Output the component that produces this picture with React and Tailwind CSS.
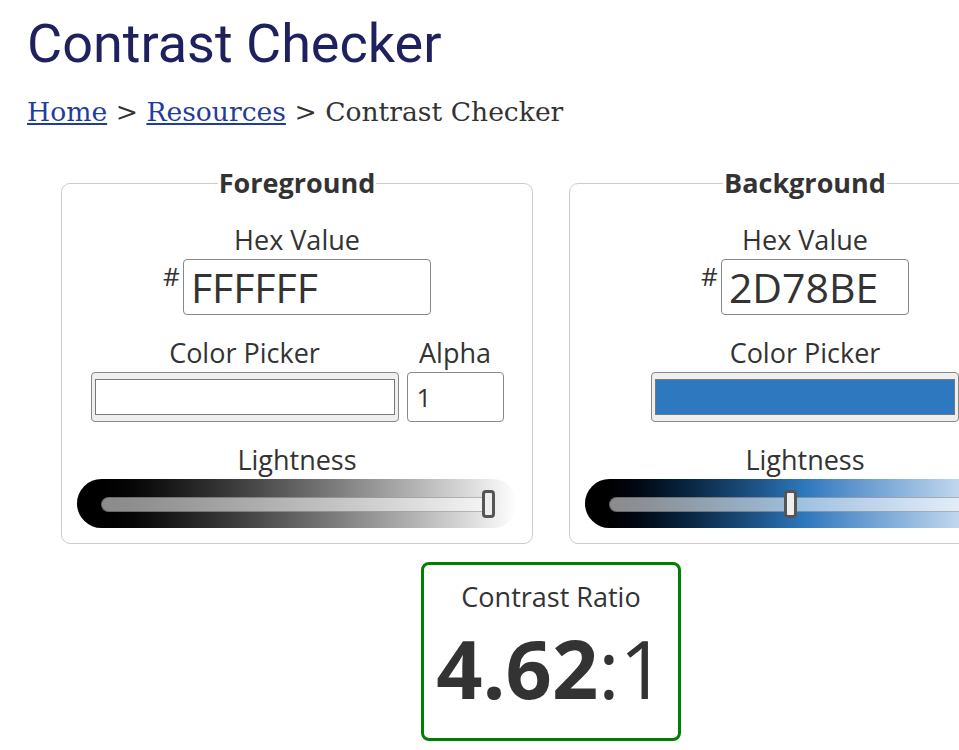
import React from 'react'

const sans = { fontFamily: '"Open Sans", "Liberation Sans", sans-serif' }

const label = 'pt-[2px] text-[27px] leading-[34px] text-[#333]'

function Slider({ gradient, thumbLeft }) {
  return (
    <div className={`relative h-[49px] w-[440px] rounded-full ${gradient}`}>
      <div className="absolute left-[24px] right-[24px] top-[18px] h-[15px] rounded-full border border-black/25 bg-white/55" />
      <div
        className="absolute top-[11px] h-[28px] w-[13px] rounded-[4px] border-[3px] border-[#555] bg-[#eee]"
        style={{ left: thumbLeft }}
      />
    </div>
  )
}

function Panel({ title, hex, inputWidth, swatch, alpha, gradient, thumbLeft }) {
  return (
    <fieldset className="w-[472px] shrink-0 rounded-[9px] border border-[#ccc] px-[15px] pb-[15px]">
      <legend className="mx-auto px-[1px] text-[27px] font-bold leading-[28px] text-[#333]">{title}</legend>
      <div className="mt-[24px] flex flex-col items-center gap-[2px]">
        <div className={label}>Hex Value</div>
        <div className="flex items-start">
          <span className="mt-[1px] mr-[3px] text-[26px] leading-[32px] text-[#333]">#</span>
          <div
            className="h-[56px] rounded-[4px] border border-[#888] pl-[7px] text-[41px] leading-[54px] text-[#333]"
            style={{ width: inputWidth }}
          >
            {hex}
          </div>
        </div>
      </div>
      <div className="mt-[19px] flex items-end justify-center gap-[8px]">
        <div className="flex flex-col items-center gap-[2px]">
          <div className={label}>Color Picker</div>
          <div className="h-[50px] w-[308px] rounded-[4px] border border-[#888] bg-[#efefef] px-[3px] py-[6px]">
            <div className={`h-full w-full border border-[#777] ${swatch}`} />
          </div>
        </div>
        {alpha && (
          <div className="flex flex-col items-center gap-[2px]">
            <div className={label}>Alpha</div>
            <div className="h-[50px] w-[97px] rounded-[4px] border border-[#888] pl-[9px] text-[26px] leading-[48px] text-[#333]">
              1
            </div>
          </div>
        )}
      </div>
      <div className="mt-[19px] flex flex-col items-center gap-[2px]">
        <div className={label}>Lightness</div>
        <Slider gradient={gradient} thumbLeft={thumbLeft} />
      </div>
    </fieldset>
  )
}

export default function App() {
  return (
    <div className="h-[750px] w-[959px] overflow-hidden bg-white" style={sans}>
      <div className="px-[27px] pt-[12px]">
        <h1 className="text-[54px] leading-[64px] text-[#1f215e]" style={{ fontFamily: 'Roboto, sans-serif' }}>
          Contrast Checker
        </h1>
        <div
          className="mt-[18px] text-[26.6px] leading-[35px] text-[#333]"
          style={{ fontFamily: '"DejaVu Serif", serif' }}
        >
          <a href="#" className="text-[#1f3d99] underline">Home</a> &gt;{' '}
          <a href="#" className="text-[#1f3d99] underline">Resources</a> &gt; Contrast Checker
        </div>
      </div>

      <div className="ml-[61px] mt-[40px] w-[980px]">
        <div className="flex gap-[36px]">
          <Panel
            title="Foreground"
            hex="FFFFFF"
            inputWidth="248px"
            swatch="bg-white"
            alpha
            gradient="bg-gradient-to-r from-black to-white"
            thumbLeft="405px"
          />
          <Panel
            title="Background"
            hex="2D78BE"
            inputWidth="188px"
            swatch="bg-[#2d78be]"
            gradient="bg-gradient-to-r from-black via-[#2d78be] to-white"
            thumbLeft="199px"
          />
        </div>
        <div className="mt-[18px] flex justify-center">
          <div className="flex h-[179px] w-[260px] flex-col items-center rounded-[8px] border-[3px] border-[#008000] pt-[15px]">
            <div className="text-[27px] leading-[34px] text-[#333]">Contrast Ratio</div>
            <div className="mt-[6px] text-[81px] leading-[96px] text-[#333]">
              <span className="font-bold">4.62</span>:1
            </div>
          </div>
        </div>
      </div>
    </div>
  )
}
